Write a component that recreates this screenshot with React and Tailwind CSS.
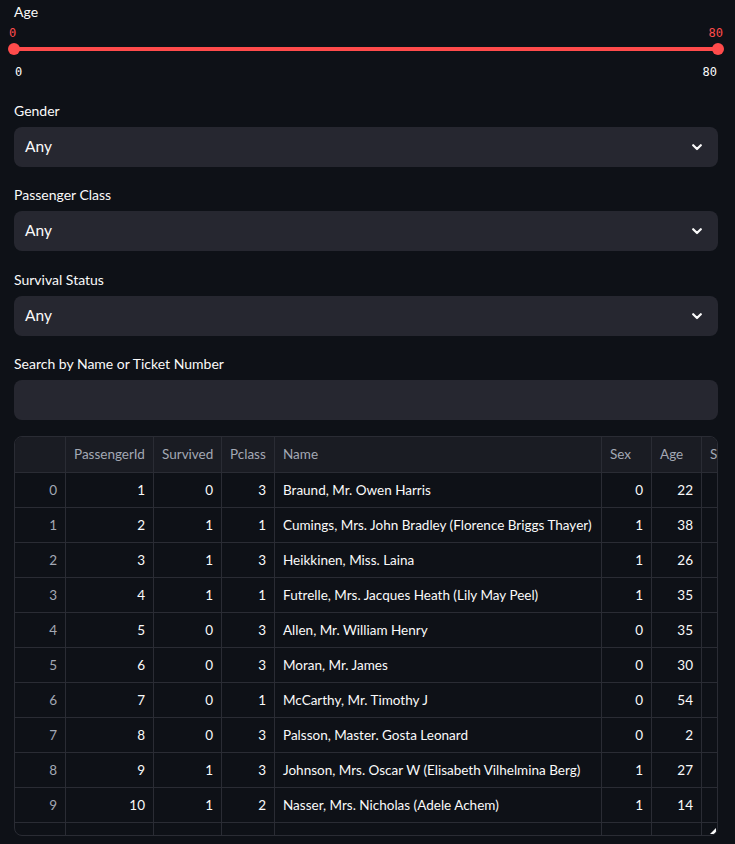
import React from 'react';

const rows = [
  [0, 1, 0, 3, 'Braund, Mr. Owen Harris', 0, 22],
  [1, 2, 1, 1, 'Cumings, Mrs. John Bradley (Florence Briggs Thayer)', 1, 38],
  [2, 3, 1, 3, 'Heikkinen, Miss. Laina', 1, 26],
  [3, 4, 1, 1, 'Futrelle, Mrs. Jacques Heath (Lily May Peel)', 1, 35],
  [4, 5, 0, 3, 'Allen, Mr. William Henry', 0, 35],
  [5, 6, 0, 3, 'Moran, Mr. James', 0, 30],
  [6, 7, 0, 1, 'McCarthy, Mr. Timothy J', 0, 54],
  [7, 8, 0, 3, 'Palsson, Master. Gosta Leonard', 0, 2],
  [8, 9, 1, 3, 'Johnson, Mrs. Oscar W (Elisabeth Vilhelmina Berg)', 1, 27],
  [9, 10, 1, 2, 'Nasser, Mrs. Nicholas (Adele Achem)', 1, 14],
  [10, 11, 1, 3, 'Sandstrom, Miss. Marguerite Rut', 1, 4],
];

function Chevron() {
  return (
    <svg width="10" height="7" viewBox="0 0 10 7" className="shrink-0">
      <path d="M1.2 1.2 5 5 8.8 1.2" fill="none" stroke="#fafafa" strokeWidth="2.2" strokeLinecap="round" strokeLinejoin="round" />
    </svg>
  );
}

function Select({ label, gap = 'mb-[18px]' }) {
  return (
    <div className={gap}>
      <div className="h-5 text-[14px] leading-5 text-[#fafafa] mb-[6px]">{label}</div>
      <div className="h-10 rounded-lg bg-[#262730] flex items-center justify-between pl-[11px] pr-[16px]">
        <span className="text-[15.5px] text-[#fafafa]">Any</span>
        <Chevron />
      </div>
    </div>
  );
}

const cell = 'shrink-0 border-r border-[#2a2c34] px-[8px] flex items-center';

function Row({ r, i }) {
  const last = i === rows.length - 1;
  return (
    <div className={`flex h-[35px] ${last ? '' : 'border-b border-[#2a2c34]'}`}>
      <div className={`${cell} w-[51px] justify-end text-[#a3a8b4]`}>{r[0]}</div>
      <div className={`${cell} w-[88px] justify-end`}>{r[1]}</div>
      <div className={`${cell} w-[68px] justify-end`}>{r[2]}</div>
      <div className={`${cell} w-[53px] justify-end`}>{r[3]}</div>
      <div className={`${cell} w-[327px] whitespace-nowrap overflow-hidden`}>{r[4]}</div>
      <div className={`${cell} w-[50px] justify-end`}>{r[5]}</div>
      <div className={`${cell} w-[50px] justify-end`}>{r[6]}</div>
      <div className={`${cell} w-[60px]`} />
    </div>
  );
}

export default function App() {
  return (
    <div className="min-h-screen w-[735px] bg-[#0e1117] pl-[14px] pr-[17px] pt-[2px] text-[#fafafa]" style={{ fontFamily: 'Lato, "Noto Sans", sans-serif' }}>
      <div className="h-5 text-[14px] leading-5">Age</div>

      {/* slider */}
      <div className="relative h-[42px]">
        <span className="absolute left-[-5px] top-[3px] text-[12px] leading-4 text-[#ff4b4b] font-['DejaVu_Sans_Mono',monospace]">0</span>
        <span className="absolute right-[-5px] top-[3px] text-[12px] leading-4 text-[#ff4b4b] font-['DejaVu_Sans_Mono',monospace]">80</span>
        <div className="absolute left-0 right-0 top-[25px] h-1 rounded-full bg-[#ff4b4b]" />
        <div className="absolute left-[-6px] top-[21px] w-3 h-3 rounded-full bg-[#ff4b4b]" />
        <div className="absolute right-[-6px] top-[21px] w-3 h-3 rounded-full bg-[#ff4b4b]" />
      </div>
      <div className="flex justify-between h-4 text-[12px] leading-4 font-['DejaVu_Sans_Mono',monospace] pl-px pr-px">
        <span>0</span>
        <span>80</span>
      </div>

      <div className="mt-[21px]">
        <Select label="Gender" />
        <Select label="Passenger Class" gap="mb-[19px]" />
        <Select label="Survival Status" />
        <div className="mb-4">
          <div className="h-5 text-[14px] leading-5 mb-[6px]">Search by Name or Ticket Number</div>
          <div className="h-10 rounded-lg bg-[#262730]" />
        </div>
      </div>

      {/* dataframe */}
      <div className="relative h-[400px] w-[704px] border border-[#2a2c34] rounded-lg overflow-hidden text-[13.5px]">
        <div className="flex h-[36px] border-b border-[#2a2c34] bg-[#1a1c23] text-[#a3a8b4]">
          <div className={`${cell} w-[51px]`}></div>
          <div className={`${cell} w-[88px]`}>PassengerId</div>
          <div className={`${cell} w-[68px]`}>Survived</div>
          <div className={`${cell} w-[53px]`}>Pclass</div>
          <div className={`${cell} w-[327px]`}>Name</div>
          <div className={`${cell} w-[50px]`}>Sex</div>
          <div className={`${cell} w-[50px]`}>Age</div>
          <div className={`${cell} w-[60px]`}>S</div>
        </div>
        {rows.map((r, i) => (
          <Row key={i} r={r} i={i} />
        ))}
        <svg width="6" height="6" viewBox="0 0 6 6" className="absolute right-[1px] bottom-[1px]">
          <path d="M6 0V6H0Z" fill="#fafafa" />
        </svg>
      </div>
    </div>
  );
}
